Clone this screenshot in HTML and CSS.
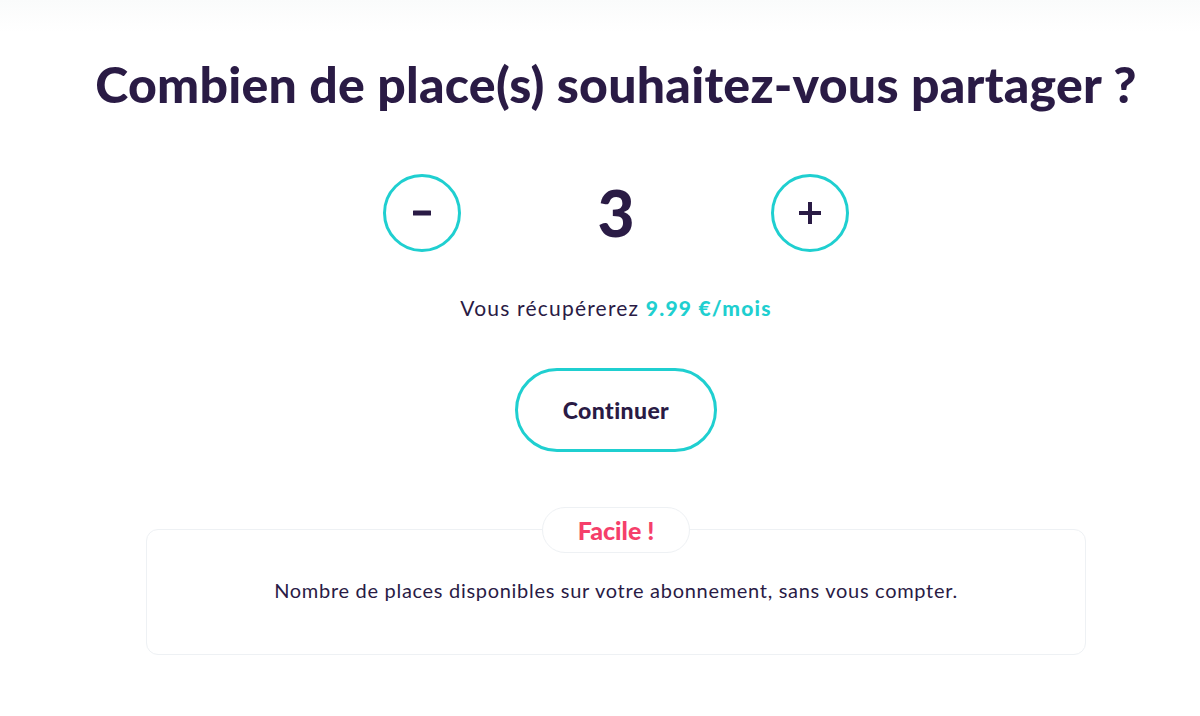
FILE: index.html
```html
<!DOCTYPE html>
<html lang="fr">
<head>
<meta charset="UTF-8">
<meta name="viewport" content="width=device-width, initial-scale=1.0">
<title>Partager des places</title>
<link rel="stylesheet" href="styles.css">
</head>
<body>
    <div class="page">
        <h1 class="title">Combien de place(s) souhaitez-vous partager ?</h1>

        <div class="counter">
            <button class="round-btn" type="button" aria-label="Retirer une place">
                <svg width="20" height="6" viewBox="0 0 20 6"><rect x="1" y="0.5" width="18" height="5" rx="0.5" fill="currentColor"/></svg>
            </button>
            <span class="count">3</span>
            <button class="round-btn" type="button" aria-label="Ajouter une place">
                <svg width="24" height="24" viewBox="0 0 24 24"><path d="M10 1h4v9h9v4h-9v9h-4v-9H1v-4h9z" fill="currentColor"/></svg>
            </button>
        </div>

        <p class="gain">Vous récupérerez <strong>9.99 €/mois</strong></p>

        <button class="next-btn" type="button">Continuer</button>

        <div class="info-card">
            <span class="badge">Facile !</span>
            <p>Nombre de places disponibles sur votre abonnement, sans vous compter.</p>
        </div>
    </div>
</body>
</html>
```

FILE: styles.css
```css
/* Page de choix du nombre de places */
body {
    margin: 0;
    font-family: Lato, "Open Sans", sans-serif;
    color: #2a1b45;
    background: linear-gradient(#fafbfb, #ffffff 32px);
    min-height: 100vh;
}

.page {
    display: flex;
    flex-direction: column;
    align-items: center;
    padding-left: 32px;
}

.title {
    margin: 56px 0 0;
    font-size: 50px;
    line-height: 56px;
    font-weight: 900;
    letter-spacing: 0.25px;
}

.counter {
    display: flex;
    align-items: center;
    gap: 135px;
    margin-top: 62px;
}

.round-btn {
    width: 78px;
    height: 78px;
    border: 3px solid #1fcfd0;
    border-radius: 50%;
    background: #fff;
    color: #2a1b45;
    padding: 0;
    display: flex;
    align-items: center;
    justify-content: center;
    cursor: pointer;
}

.count {
    width: 40px;
    text-align: center;
    font-size: 64px;
    font-weight: 900;
    line-height: 1;
}

.gain {
    margin: 42px 0 0;
    font-size: 21px;
    line-height: 28px;
    letter-spacing: 1.2px;
}

.gain strong {
    color: #1fcfd0;
    font-weight: 900;
}

.next-btn {
    margin-top: 46px;
    width: 202px;
    height: 84px;
    border: 3px solid #1fcfd0;
    border-radius: 42px;
    background: #fff;
    color: #2a1b45;
    font-family: inherit;
    font-size: 23px;
    font-weight: 900;
    letter-spacing: 0.4px;
    cursor: pointer;
}

.info-card {
    position: relative;
    margin-top: 77px;
    width: 940px;
    height: 126px;
    box-sizing: border-box;
    border: 1.5px solid #eef1f4;
    border-radius: 12px;
    display: flex;
    align-items: center;
    justify-content: center;
}

.info-card p {
    margin: 0;
    padding-bottom: 4px;
    font-size: 20px;
    letter-spacing: 0.7px;
}

.badge {
    position: absolute;
    top: -23px;
    left: 50%;
    transform: translateX(-50%);
    width: 148px;
    height: 46px;
    box-sizing: border-box;
    border: 1.5px solid #eef1f4;
    border-radius: 23px;
    background: #fff;
    color: #f53f6b;
    font-size: 25px;
    font-weight: 900;
    display: flex;
    align-items: center;
    justify-content: center;
}
```
